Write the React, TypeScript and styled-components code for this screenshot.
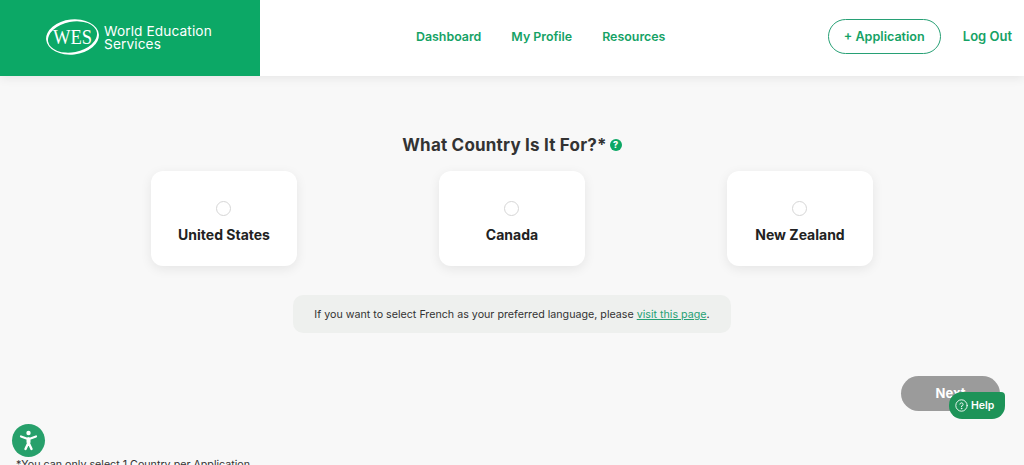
import React from "react";
import styled, { createGlobalStyle } from "styled-components";

const Global = createGlobalStyle`
  html, body { margin: 0; padding: 0; height: 465px; overflow: hidden; background: #f8f8f8; }
  body { font-family: Inter, "Open Sans", "Liberation Sans", sans-serif; }
  * { box-sizing: border-box; }
`;

const Page = styled.div`
  position: relative;
  width: 1024px;
  height: 465px;
  overflow: hidden;
  background: #f8f8f8;
  display: flex;
  flex-direction: column;
`;

const Header = styled.header`
  height: 76px;
  flex: none;
  background: #fff;
  display: flex;
  align-items: stretch;
  box-shadow: 0 2px 10px rgba(0, 0, 0, 0.08);
`;

const Brand = styled.div`
  width: 260px;
  background: #0ca866;
  display: flex;
  align-items: center;
  padding-left: 45px;
  padding-bottom: 3px;
  gap: 4px;
`;

const BrandName = styled.div`
  color: #fff;
  font-size: 13.7px;
  line-height: 13px;
  font-weight: 400;
  letter-spacing: 0.1px;
  margin-top: 2px;
`;

const Nav = styled.nav`
  display: flex;
  align-items: center;
  gap: 30px;
  margin-left: 156px;
  padding-bottom: 4px;
`;

const NavLink = styled.a`
  color: #15a265;
  font-size: 12.4px;
  font-weight: 600;
  white-space: nowrap;
`;

const LogOutLink = styled(NavLink)`
  font-size: 13px;
`;

const HeaderActions = styled.div`
  margin-left: auto;
  display: flex;
  align-items: center;
  gap: 22px;
  padding-right: 12px;
  padding-bottom: 4px;
`;

const OutlineButton = styled.button`
  width: 113px;
  height: 35px;
  border: 1.5px solid #27a075;
  border-radius: 18px;
  background: #fff;
  color: #15a265;
  font: 600 12.6px Inter, sans-serif;
  padding: 0;
`;

const Main = styled.main`
  flex: 1;
  display: flex;
  flex-direction: column;
  align-items: center;
  padding-top: 59px;
`;

const Title = styled.h1`
  margin: 0;
  height: 20px;
  display: flex;
  align-items: center;
  gap: 3px;
  font-size: 17px;
  line-height: 20px;
  font-weight: 700;
  letter-spacing: 0.2px;
  color: #333;
`;

const HintBadge = styled.span`
  width: 12px;
  height: 12px;
  border-radius: 50%;
  background: #0ca765;
  color: #fff;
  font-size: 9px;
  font-weight: 800;
  line-height: 12px;
  text-align: center;
`;

const Cards = styled.div`
  display: flex;
  gap: 142px;
  margin-top: 16px;
`;

const Card = styled.div`
  width: 146px;
  height: 95px;
  background: #fff;
  border-radius: 12px;
  box-shadow: 0 3px 12px rgba(0, 0, 0, 0.08);
  display: flex;
  flex-direction: column;
  align-items: center;
  padding-top: 30px;
`;

const Radio = styled.span`
  width: 15px;
  height: 15px;
  margin-right: 1px;
  border-radius: 50%;
  border: 1.5px solid #d6d6d6;
  background: #fff;
`;

const CardLabel = styled.div`
  margin-top: 10px;
  font-size: 14px;
  line-height: 18px;
  font-weight: 700;
  color: #222;
  white-space: nowrap;
`;

const Notice = styled.div`
  width: 438px;
  height: 38px;
  margin-top: 29px;
  background: #eef0ee;
  border-radius: 10px;
  display: flex;
  align-items: center;
  justify-content: center;
  font-size: 10.7px;
  font-weight: 400;
  color: #333;
  white-space: pre;
`;

const NoticeLink = styled.a`
  color: #27a075;
  text-decoration: underline;
`;

const NextRow = styled.div`
  align-self: stretch;
  display: flex;
  justify-content: flex-end;
  padding-right: 24px;
  margin-top: 43px;
`;

const NextButton = styled.button`
  width: 99px;
  height: 35px;
  border: none;
  border-radius: 18px;
  background: #9b9b9b;
  color: #fff;
  font: 700 13px Inter, sans-serif;
  padding: 0 0 2px;
`;

const Footnote = styled.div`
  position: absolute;
  left: 16px;
  top: 458px;
  font-size: 10.7px;
  line-height: 14px;
  color: #333;
  white-space: nowrap;
`;

const HelpButton = styled.button`
  position: absolute;
  left: 949px;
  top: 392px;
  width: 56px;
  height: 27px;
  border: none;
  border-radius: 13px 4px 13px 13px;
  background: #1d9358;
  color: #fff;
  font: 600 10.5px Inter, sans-serif;
  display: flex;
  align-items: center;
  gap: 3px;
  padding: 0 0 0 6px;
`;

const A11yButton = styled.button`
  position: absolute;
  left: 12px;
  top: 424px;
  width: 33px;
  height: 33px;
  border: none;
  border-radius: 50%;
  background: #27a06b;
  padding: 0;
  display: flex;
  align-items: center;
  justify-content: center;
`;

const countries = ["United States", "Canada", "New Zealand"];

const Logo = () => (
  <svg width="55" height="38" viewBox="0 0 55 38" aria-hidden="true">
    <ellipse cx="27.5" cy="19" rx="26.5" ry="17.5" fill="#fff" transform="rotate(-6 27.5 19)" />
    <ellipse cx="27.5" cy="19" rx="24.8" ry="15.2" fill="#0ca866" transform="rotate(-11 27.5 19)" />
    <text x="27.5" y="26" textAnchor="middle" fill="#fff" fontFamily="'Liberation Serif', serif" fontSize="21" textLength="39" lengthAdjust="spacingAndGlyphs">WES</text>
  </svg>
);

export default function App() {
  return (
    <Page>
      <Global />
      <Header>
        <Brand>
          <Logo />
          <BrandName>World Education<br />Services</BrandName>
        </Brand>
        <Nav>
          <NavLink>Dashboard</NavLink>
          <NavLink>My Profile</NavLink>
          <NavLink>Resources</NavLink>
        </Nav>
        <HeaderActions>
          <OutlineButton>+ Application</OutlineButton>
          <LogOutLink>Log Out</LogOutLink>
        </HeaderActions>
      </Header>
      <Main>
        <Title>What Country Is It For?*<HintBadge>?</HintBadge></Title>
        <Cards>
          {countries.map((c) => (
            <Card key={c}>
              <Radio />
              <CardLabel>{c}</CardLabel>
            </Card>
          ))}
        </Cards>
        <Notice>If you want to select French as your preferred language, please <NoticeLink>visit this page</NoticeLink>.</Notice>
        <NextRow><NextButton>Next</NextButton></NextRow>
      </Main>
      <Footnote>*You can only select 1 Country per Application</Footnote>
      <A11yButton aria-label="Accessibility">
        <svg width="25" height="25" viewBox="0 0 25 25" fill="none" stroke="#fff" strokeLinecap="round" strokeLinejoin="round">
          <circle cx="12.5" cy="5" r="2.2" fill="#fff" stroke="none" />
          <path d="M5 8.5 L10.5 10.5 H14.5 L20 8.5" strokeWidth="2.2" />
          <path d="M12.5 10.5 V14.5 M12.5 14.5 L9.5 21 M12.5 14.5 L15.5 21" strokeWidth="2.4" />
          <path d="M10.5 10.5 V14.8 H14.5 V10.5 Z" fill="#fff" stroke="none" />
        </svg>
      </A11yButton>
      <HelpButton>
        <svg width="13" height="13" viewBox="0 0 13 13" fill="none" stroke="#fff" strokeWidth="0.9" strokeLinecap="round">
          <circle cx="6.5" cy="6.5" r="5.7" />
          <path d="M4.9 5.1 A1.6 1.6 0 1 1 6.5 7 V7.7" />
          <circle cx="6.5" cy="9.6" r="0.3" />
        </svg>
        Help
      </HelpButton>
    </Page>
  );
}
